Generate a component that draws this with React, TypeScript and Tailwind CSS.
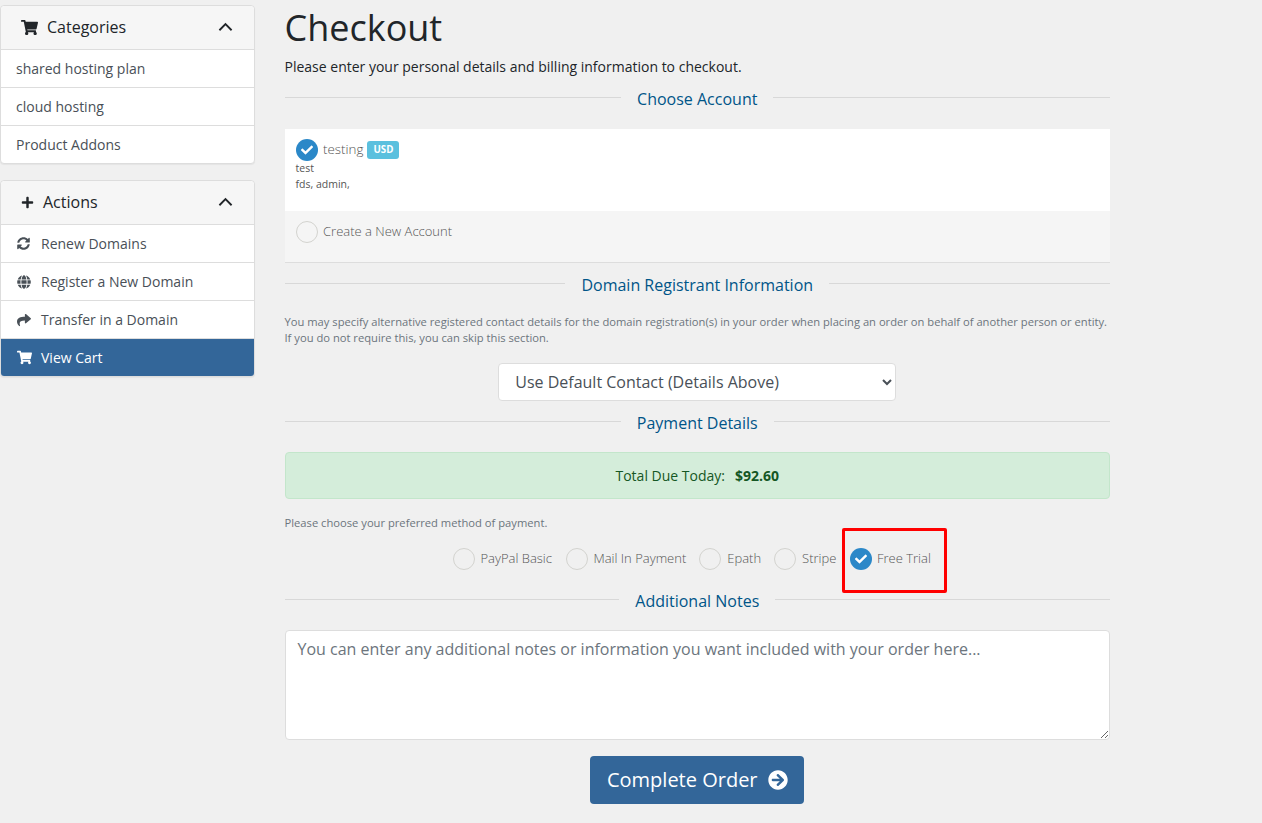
import { ReactNode } from "react"
import { FaShoppingCart, FaPlus, FaSyncAlt, FaGlobe, FaShare, FaArrowCircleRight, FaCheck } from "react-icons/fa"

function Chevron() {
  return (
    <svg viewBox="0 0 16 10" className="w-[15px] h-[10px] ml-auto mr-[21px] fill-none stroke-[#212529] stroke-[2]">
      <path d="M1.5 8.5 L8 2 L14.5 8.5" />
    </svg>
  )
}

function PanelHeader({ icon, title }: { icon: ReactNode; title: string }) {
  return (
    <div className="flex items-center h-[44px] pb-px bg-[#f6f6f6] border-b border-[#ddd] rounded-t-[4px] text-[16px] text-[#212529]">
      {icon}
      <span>{title}</span>
      <Chevron />
    </div>
  )
}

function MenuRow({ icon, label, active, last }: { icon?: ReactNode; label: string; active?: boolean; last?: boolean }) {
  return (
    <div
      className={
        "flex items-center text-[14px] " +
        (active ? "bg-[#336699] text-white rounded-b-[3px] " : "text-[#495057] ") +
        (last ? "h-[37px]" : "h-[38px] border-b border-[#ddd]")
      }
    >
      {icon ? <span className="w-[40px] pl-[16px] flex items-center shrink-0">{icon}</span> : <span className="w-[15px] shrink-0" />}
      <span>{label}</span>
    </div>
  )
}

function SectionTitle({ children }: { children: string }) {
  return (
    <div className="flex items-center h-[22px] text-[16px] text-[#058]">
      <div className="flex-1 h-px mb-[4px] bg-[#d8d8d8]" />
      <span className="px-[16px]">{children}</span>
      <div className="flex-1 h-px mb-[4px] bg-[#d8d8d8]" />
    </div>
  )
}

function Radio({ checked }: { checked?: boolean }) {
  if (checked) {
    return (
      <span className="w-[22px] h-[22px] rounded-full bg-[#2b88c8] flex items-center justify-center shrink-0">
        <FaCheck className="text-white text-[12px]" />
      </span>
    )
  }
  return <span className="w-[22px] h-[22px] rounded-full border border-[#d3d3cf] shrink-0" />
}

function PayOption({ label, checked, className }: { label: string; checked?: boolean; className: string }) {
  return (
    <div className={"flex items-center text-[13px] font-light text-[#555] " + className}>
      <Radio checked={checked} />
      <span className="-mt-px">{label}</span>
    </div>
  )
}

export default function App() {
  return (
    <div className="relative w-[1262px] h-[823px] overflow-hidden bg-[#f0f0f0] flex font-['Open_Sans',sans-serif]">
      <aside className="w-[255px] pt-[5px] shrink-0">
        <div className="bg-white border border-[#ddd] rounded-[4px] shadow-[0_1px_1px_rgba(0,0,0,0.05)]">
          <PanelHeader icon={<FaShoppingCart className="ml-[20px] mr-[9px] text-[17px] text-[#212529]" />} title="Categories" />
          <MenuRow label="shared hosting plan" />
          <MenuRow label="cloud hosting" />
          <MenuRow label="Product Addons" last />
        </div>
        <div className="mt-[16px] bg-white border border-[#ddd] rounded-[4px] shadow-[0_1px_1px_rgba(0,0,0,0.05)]">
          <PanelHeader icon={<FaPlus className="ml-[20px] mr-[9px] text-[13px] text-[#212529]" />} title="Actions" />
          <MenuRow icon={<FaSyncAlt className="text-[13px] text-[#495057]" />} label="Renew Domains" />
          <MenuRow icon={<FaGlobe className="text-[14px] text-[#495057]" />} label="Register a New Domain" />
          <MenuRow icon={<FaShare className="text-[14px] text-[#495057]" />} label="Transfer in a Domain" />
          <MenuRow icon={<FaShoppingCart className="text-[15px] text-white" />} label="View Cart" active last />
        </div>
      </aside>

      <main className="w-[825.5px] ml-[29.5px] shrink-0">
        <h1 className="mt-[6px] text-[36px] leading-[43px] text-[#212529]">Checkout</h1>
        <p className="mt-[7px] text-[14px] leading-[21px] text-[#212529]">
          Please enter your personal details and billing information to checkout.
        </p>

        <div className="mt-[11px]">
          <SectionTitle>Choose Account</SectionTitle>
        </div>

        <div className="mt-[19px] border-b border-[#ddd]">
          <div className="h-[82px] bg-white pl-[11px] pt-[10px]">
            <div className="flex items-center h-[22px]">
              <Radio checked />
              <span className="ml-[5.5px] -mt-px text-[13.4px] font-light text-[#555]">testing</span>
              <span className="ml-[4px] h-[18px] px-[6px] flex items-center rounded-[3px] bg-[#5bc0de] text-white text-[9.75px] font-bold">USD</span>
            </div>
            <div className="-mt-px text-[10.5px] leading-[16px] text-[#555]">test</div>
            <div className="text-[10.5px] leading-[16px] text-[#555]">fds, admin,</div>
          </div>
          <div className="h-[51px] bg-[#f5f5f5] pl-[11px] pt-[10px] flex items-start">
            <Radio />
            <span className="ml-[5.5px] text-[13px] leading-[20px] font-light text-[#555]">Create a New Account</span>
          </div>
        </div>

        <div className="mt-[11px]">
          <SectionTitle>Domain Registrant Information</SectionTitle>
        </div>

        <p className="mt-[18px] text-[11.2px] leading-[16px] text-[#6c757d]">
          You may specify alternative registered contact details for the domain registration(s) in your order when placing an order on behalf of another person or entity. If you do not require this, you can skip this section.
        </p>

        <div className="mt-[17px] flex justify-center">
          <select className="w-[398px] h-[38px] pl-[12px] bg-white border border-[#ddd] rounded-[4px] text-[16px] text-[#495057] font-['Open_Sans',sans-serif]">
            <option>Use Default Contact (Details Above)</option>
          </select>
        </div>

        <div className="mt-[11px]">
          <SectionTitle>Payment Details</SectionTitle>
        </div>

        <div className="mt-[18px] h-[47px] flex items-center justify-center bg-[#d4edda] border border-[#c3e6cb] rounded-[4px] text-[14px] text-[#155724]">
          <span>Total Due Today:</span>
          <strong className="ml-[10px] font-bold">$92.60</strong>
        </div>

        <p className="mt-[16px] text-[11.2px] leading-[16px] text-[#6c757d]">Please choose your preferred method of payment.</p>

        <div className="mt-[17px] flex h-[22px]">
          <PayOption label="PayPal Basic" className="ml-[168px] gap-[6px]" />
          <PayOption label="Mail In Payment" className="ml-[14.5px] gap-[5px]" />
          <PayOption label="Epath" className="ml-[13px] gap-[6px]" />
          <PayOption label="Stripe" className="ml-[13px] gap-[6px]" />
          <PayOption label="Free Trial" checked className="ml-[13.5px] gap-[5px]" />
        </div>

        <div className="mt-[20px]">
          <SectionTitle>Additional Notes</SectionTitle>
        </div>

        <textarea
          className="mt-[18px] block w-full h-[110px] px-[12px] py-[6px] bg-white border border-[#ddd] rounded-[4px] text-[16px] leading-[24px] text-[#495057] placeholder:text-[#6c757d] font-['Open_Sans',sans-serif]"
          placeholder="You can enter any additional notes or information you want included with your order here..."
        />

        <div className="mt-[16px] flex justify-center">
          <button className="h-[48px] w-[214px] flex items-center justify-center gap-[10px] bg-[#336699] rounded-[4px] text-white text-[20px]">
            Complete Order
            <FaArrowCircleRight className="text-[20px]" />
          </button>
        </div>
      </main>

      <div className="absolute left-[842px] top-[528px] w-[105px] h-[65px] border-[3px] border-[#f00] rounded-[2px]" />
    </div>
  )
}
